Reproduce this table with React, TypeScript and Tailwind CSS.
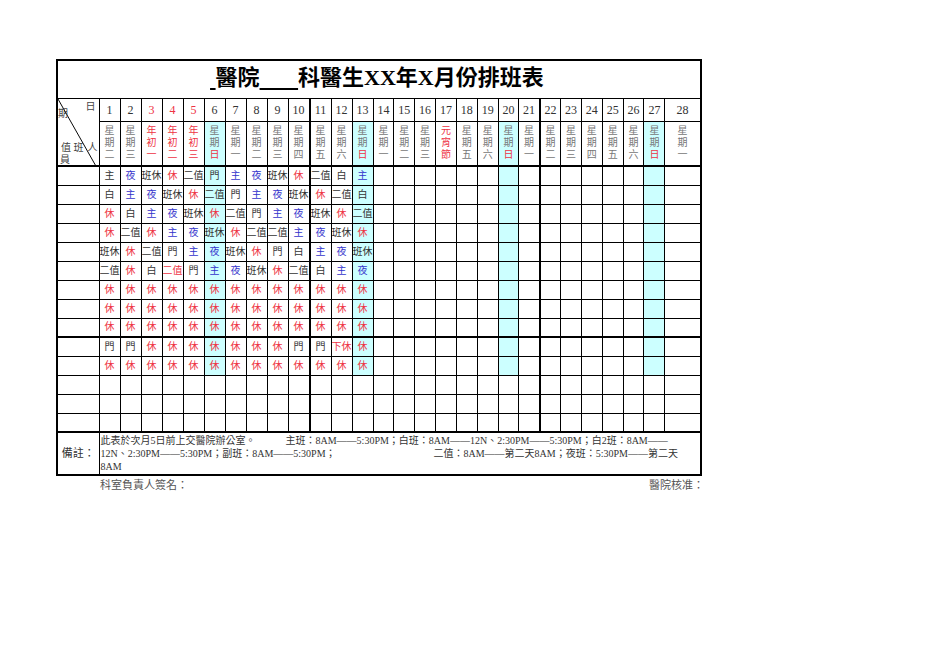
import React from "react";

const days = Array.from({ length: 28 }, (_, i) => i + 1);
const sundays = new Set([6, 13, 20, 27]);
const thickRight = new Set([10, 21]);
const redDates = new Set([3, 4, 5]);
const wk = ["日", "一", "二", "三", "四", "五", "六"];

// [char, isRed]
function weekdayOf(d: number): [string, boolean][] {
  if (d === 3) return [["年", true], ["初", true], ["一", true]];
  if (d === 4) return [["年", true], ["初", true], ["二", true]];
  if (d === 5) return [["年", true], ["初", true], ["三", true]];
  if (d === 17) return [["元", true], ["宵", true], ["節", true]];
  const name = wk[(d + 1) % 7];
  return [["星", false], ["期", false], [name, name === "日"]];
}

const schedule: string[][] = [
  ["主", "夜", "班休", "休", "二值", "門", "主", "夜", "班休", "休", "二值", "白", "主"],
  ["白", "主", "夜", "班休", "休", "二值", "門", "主", "夜", "班休", "休", "二值", "白"],
  ["休", "白", "主", "夜", "班休", "休", "二值", "門", "主", "夜", "班休", "休", "二值"],
  ["休", "二值", "休", "主", "夜", "班休", "休", "二值", "二值", "主", "夜", "班休", "休"],
  ["班休", "休", "二值", "門", "主", "夜", "班休", "休", "門", "白", "主", "夜", "班休"],
  ["二值", "休", "白", "二值", "門", "主", "夜", "班休", "休", "二值", "白", "主", "夜"],
  Array(13).fill("休"),
  Array(13).fill("休"),
  Array(13).fill("休"),
  ["門", "門", "休", "休", "休", "休", "休", "休", "休", "門", "門", "下休", "休"],
  Array(13).fill("休"),
  [],
  [],
  [],
];

function cellColor(v: string, r: number, c: number) {
  if (r === 0 && c === 0) return "text-[#333]";
  if (r === 5 && c === 3) return "text-[#ee3344]";
  if (v === "休" || v === "下休") return "text-[#ee3344]";
  if (v === "主" || v === "夜") return "text-[#3333cc]";
  return "text-[#333]";
}

export default function App() {
  return (
    <div className="h-[662px] w-[936px] bg-white font-['Liberation_Serif','Noto_Sans_CJK_TC',serif] text-[#333]">
      <div className="pl-[56px] pt-[59px]">
        <table className="table-fixed border-collapse border-2 border-black">
          <colgroup>
            <col className="w-[42px]" />
            {days.slice(0, 27).map((d) => (
              <col key={d} className="w-[20.85px]" />
            ))}
            <col className="w-[36px]" />
          </colgroup>
          <tbody>
            <tr>
              <td colSpan={29} className="h-[38px] border border-black p-0 text-center">
                <span className="pr-[4px] text-[22px] font-bold leading-none text-black">
                  <span className="underline decoration-2 underline-offset-[3px]">&nbsp;</span>
                  醫院
                  <span className="underline decoration-2 underline-offset-[3px]">&nbsp;&nbsp;&nbsp;&nbsp;&nbsp;&nbsp;&nbsp;</span>
                  科醫生XX年X月份排班表
                </span>
              </td>
            </tr>
            <tr className="h-[23px]">
              <td rowSpan={2} className="relative border border-b-2 border-black p-0 text-[10px] leading-none text-[#444]">
                <svg className="absolute inset-0 h-full w-full" viewBox="0 0 42 67" preserveAspectRatio="none">
                  <line x1="0" y1="0" x2="39" y2="67" stroke="#000" strokeWidth="1" />
                </svg>
                <span className="absolute right-[3px] top-[3px]">日</span>
                <span className="absolute left-[0px] top-[10px]">期</span>
                <span className="absolute left-[3px] top-[44px]">值&nbsp;班</span>
                <span className="absolute right-[1px] top-[44px]">人</span>
                <span className="absolute left-[2px] top-[56px]">員</span>
              </td>
              {days.map((d) => (
                <td
                  key={d}
                  className={`border border-black p-0 text-center text-[12px] leading-none ${
                    thickRight.has(d) ? "border-r-2" : ""
                  } ${redDates.has(d) ? "text-[#ee3344]" : "text-[#333]"}`}
                >
                  {d}
                </td>
              ))}
            </tr>
            <tr className="h-[45px]">
              {days.map((d) => (
                <td
                  key={d}
                  className={`border border-b-2 border-black p-0 text-center text-[10px] leading-[12px] ${
                    thickRight.has(d) ? "border-r-2" : ""
                  } ${sundays.has(d) ? "bg-[#ccffff]" : ""}`}
                >
                  {weekdayOf(d).map(([ch, red], i) => (
                    <div key={i} className={red ? "text-[#ee3344]" : "text-[#777]"}>
                      {ch}
                    </div>
                  ))}
                </td>
              ))}
            </tr>
            {schedule.map((row, r) => (
              <tr key={r} className="h-[19px]">
                <td className={`border border-black p-0 ${r === 8 || r === 13 ? "border-b-2" : ""}`} />
                {days.map((d, c) => {
                  const v = row[c] ?? "";
                  return (
                    <td
                      key={d}
                      className={`overflow-hidden whitespace-nowrap border border-black p-0 text-center text-[10px] leading-none ${
                        thickRight.has(d) ? "border-r-2" : ""
                      } ${r === 8 || r === 13 ? "border-b-2" : ""} ${
                        sundays.has(d) && r < 11 ? "bg-[#ccffff]" : ""
                      } ${cellColor(v, r, c)}`}
                    >
                      {v}
                    </td>
                  );
                })}
              </tr>
            ))}
            <tr className="h-[43px]">
              <td className="border border-black p-0 text-center text-[11px] text-[#333]">備註：</td>
              <td colSpan={28} className="border border-black px-[1px] py-0 align-middle text-[10px] leading-[13px] text-[#333]">
                <div className="whitespace-nowrap">
                  此表於次月5日前上交醫院辦公室。　　　主班：8AM——5:30PM；白班：8AM——12N、2:30PM——5:30PM；白2班：8AM——
                </div>
                <div className="flex whitespace-nowrap">
                  <span className="w-[333px]">12N、2:30PM——5:30PM；副班：8AM——5:30PM；</span>
                  <span>二值：8AM——第二天8AM；夜班：5:30PM——第二天</span>
                </div>
                <div>8AM</div>
              </td>
            </tr>
          </tbody>
        </table>
        <div className="ml-[44px] mt-[1px] flex w-[604px] justify-between text-[11px] text-[#555]">
          <span>科室負責人簽名：</span>
          <span>醫院核准：</span>
        </div>
      </div>
    </div>
  );
}
